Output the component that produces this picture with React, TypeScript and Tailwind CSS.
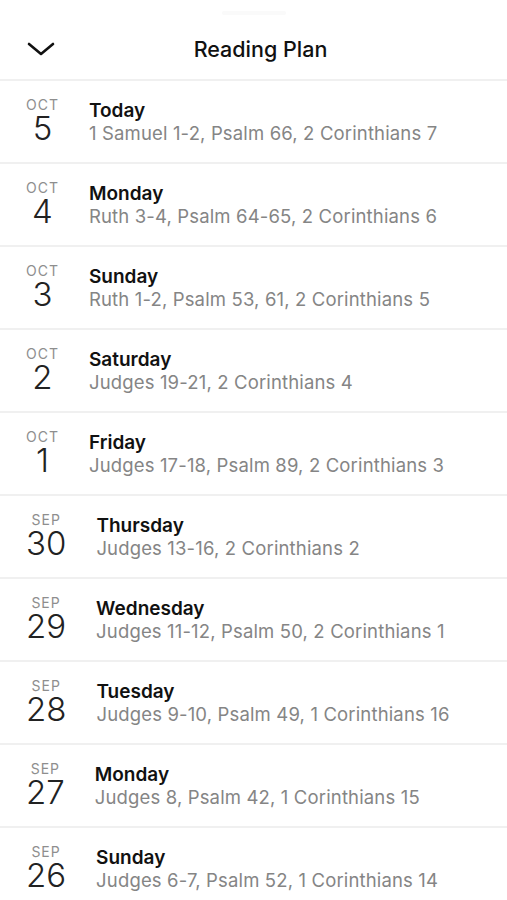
// Reading plan sheet — list of daily readings

type Entry = { month: string; day: number; title: string; readings: string };

const ENTRIES: Entry[] = [
  { month: "OCT", day: 5, title: "Today", readings: "1 Samuel 1-2, Psalm 66, 2 Corinthians 7" },
  { month: "OCT", day: 4, title: "Monday", readings: "Ruth 3-4, Psalm 64-65, 2 Corinthians 6" },
  { month: "OCT", day: 3, title: "Sunday", readings: "Ruth 1-2, Psalm 53, 61, 2 Corinthians 5" },
  { month: "OCT", day: 2, title: "Saturday", readings: "Judges 19-21, 2 Corinthians 4" },
  { month: "OCT", day: 1, title: "Friday", readings: "Judges 17-18, Psalm 89, 2 Corinthians 3" },
  { month: "SEP", day: 30, title: "Thursday", readings: "Judges 13-16, 2 Corinthians 2" },
  { month: "SEP", day: 29, title: "Wednesday", readings: "Judges 11-12, Psalm 50, 2 Corinthians 1" },
  { month: "SEP", day: 28, title: "Tuesday", readings: "Judges 9-10, Psalm 49, 1 Corinthians 16" },
  { month: "SEP", day: 27, title: "Monday", readings: "Judges 8, Psalm 42, 1 Corinthians 15" },
  { month: "SEP", day: 26, title: "Sunday", readings: "Judges 6-7, Psalm 52, 1 Corinthians 14" },
];

function Row({ e }: { e: Entry }) {
  return (
    <div className="flex h-[83px] items-center gap-[30px] border-b-2 border-[#f0f0f0] pl-[26px]">
      <div className="flex flex-col items-center">
        <span className="text-[14px] leading-[14px] tracking-[1px] text-[#8e8e8e]">{e.month}</span>
        <span className="text-[33px] font-light leading-[33px] text-[#222]">{e.day}</span>
      </div>
      <div className="flex flex-col">
        <span className="text-[19px] font-semibold leading-[23px] text-[#111]">{e.title}</span>
        <span className="text-[18.5px] leading-[23px] tracking-[0.15px] text-[#858585]">{e.readings}</span>
      </div>
    </div>
  );
}

export default function App() {
  return (
    <div className="h-[900px] w-[507px] overflow-hidden bg-white font-['Inter',sans-serif]">
      <div className="flex justify-center pt-[11px]">
        <div className="h-[4px] w-[64px] rounded-full bg-[#fafafa]" />
      </div>
      <div className="relative flex h-[66px] items-center justify-center border-b-2 border-[#f0f0f0] pb-[2px] pl-[14px] pt-[6px]">
        <svg
          width="28"
          height="16"
          viewBox="0 0 28 16"
          fill="none"
          className="absolute left-[27px] top-[26px]"
        >
          <polyline
            points="2,3 14,13 26,3"
            stroke="#111"
            strokeWidth="2.6"
            strokeLinecap="round"
            strokeLinejoin="round"
          />
        </svg>
        <span className="text-[21.5px] font-medium text-[#111]">Reading Plan</span>
      </div>
      {ENTRIES.map((e, i) => (
        <Row key={i} e={e} />
      ))}
    </div>
  );
}
